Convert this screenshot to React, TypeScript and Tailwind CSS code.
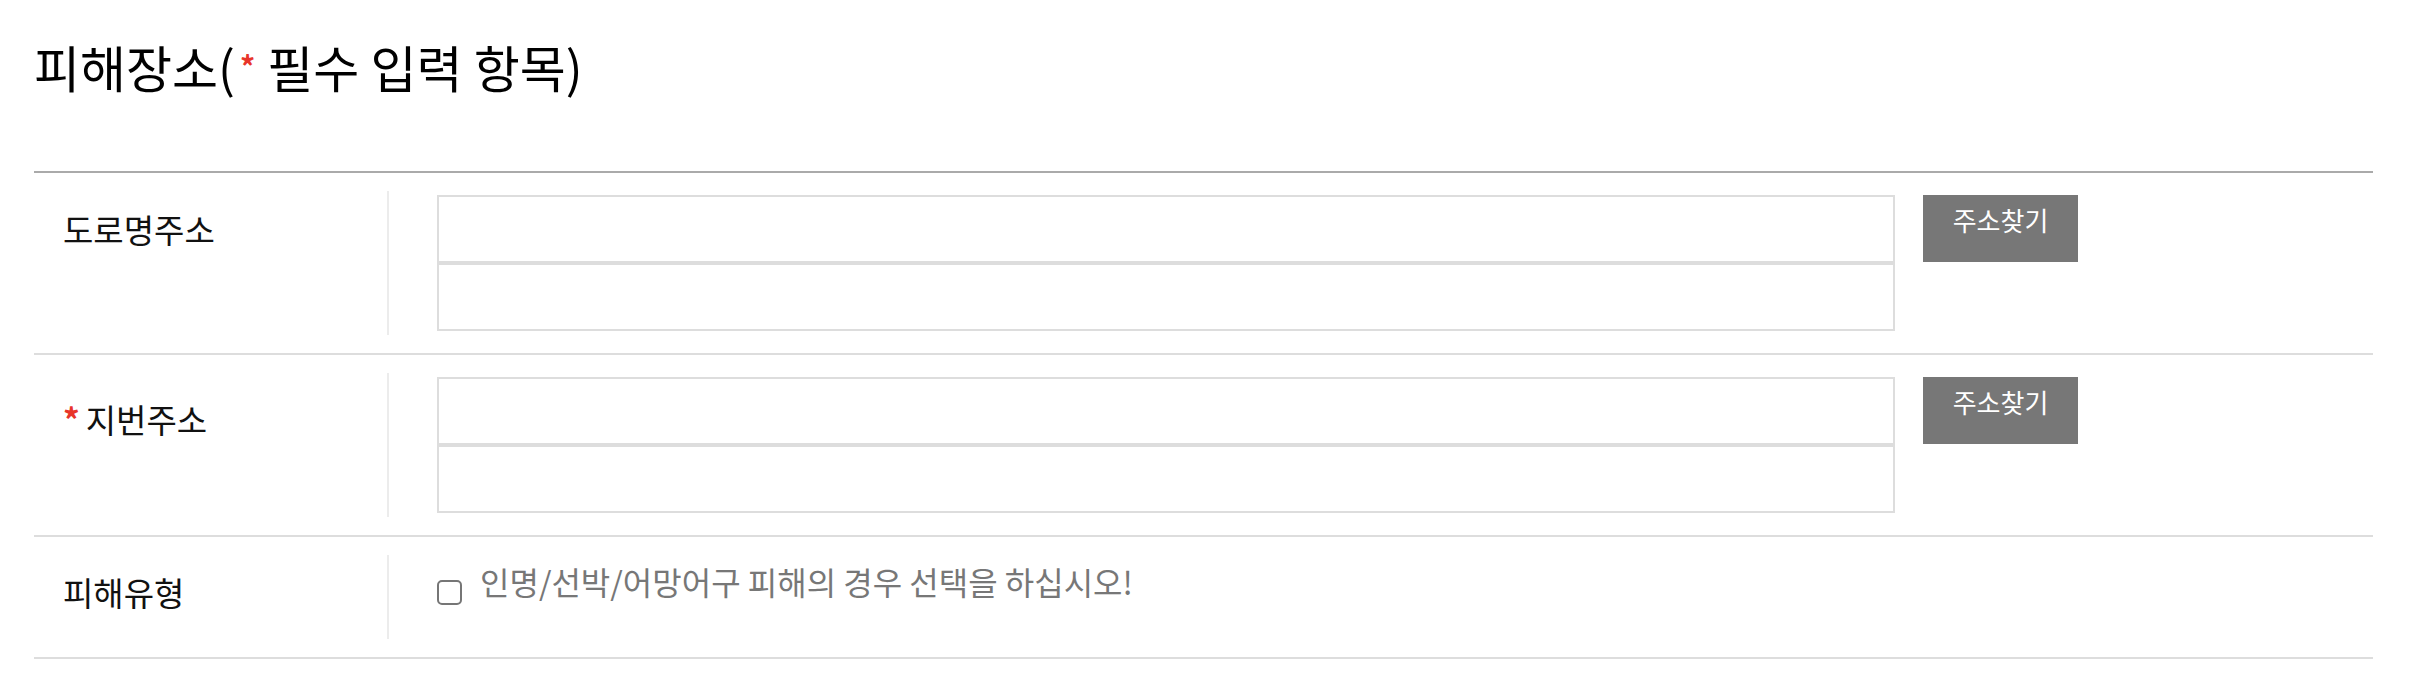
const font = { fontFamily: '"Noto Sans CJK KR", "Noto Sans", sans-serif' }

function AddressRow({ label, required, labelPad }: { label: string; required?: boolean; labelPad: string }) {
  return (
    <div className="flex border-b-2 border-[#ddd] py-[18px]">
      <div className={`w-[353px] shrink-0 pl-[29px] text-[33px] leading-[33px] text-[#111] ${labelPad}`}>
        {required && <span className="mr-[6px] font-bold text-[#e8352a]">*</span>}
        {label}
      </div>
      <div className="flex flex-1 items-start gap-[28px] border-l-2 border-[#ececec] py-1 pl-[48px]">
        <div className="flex w-[1458px] flex-col">
          <input type="text" className="h-[68px] w-full border-2 border-[#ddd] bg-white outline-none" />
          <input type="text" className="h-[68px] w-full border-2 border-[#ddd] bg-white outline-none" />
        </div>
        <button
          type="button"
          className="flex h-[67px] w-[155px] items-start justify-center bg-[#777] pt-[12px] text-[26px] leading-[26px] text-white"
        >
          주소찾기
        </button>
      </div>
    </div>
  )
}

export default function App() {
  return (
    <div className="min-h-[700px] bg-white" style={font}>
      <div className="ml-[34px] w-[2339px]">
        <h2 className="pt-[40px] text-[50px] font-normal leading-[50px] text-black">
          피해장소(<span className="ml-[5px] mr-[1px] align-[10px] text-[30px] font-bold text-[#e8352a]">*</span> 필수 입력 항목)
        </h2>

        <div className="mt-[80px] border-t-2 border-[#aaa]">
          <AddressRow label="도로명주소" labelPad="pt-[22px]" />
          <AddressRow label="지번주소" required labelPad="pt-[30px]" />

          <div className="flex border-b-2 border-[#ddd] py-[18px]">
            <div className="w-[353px] shrink-0 pl-[29px] pt-[21px] text-[33px] leading-[33px] text-[#111]">
              피해유형
            </div>
            <div className="flex h-[84px] flex-1 items-start gap-[18px] border-l-2 border-[#ececec] pl-[48px] pt-[10px]">
              <span className="mt-[15px] block h-[25px] w-[25px] shrink-0 rounded-[5px] border-2 border-[#767676] bg-white" />
              <span className="text-[32px] leading-[32px] text-[#777]">
                인명/선박/어망어구 피해의 경우 선택을 하십시오!
              </span>
            </div>
          </div>
        </div>
      </div>
    </div>
  )
}
